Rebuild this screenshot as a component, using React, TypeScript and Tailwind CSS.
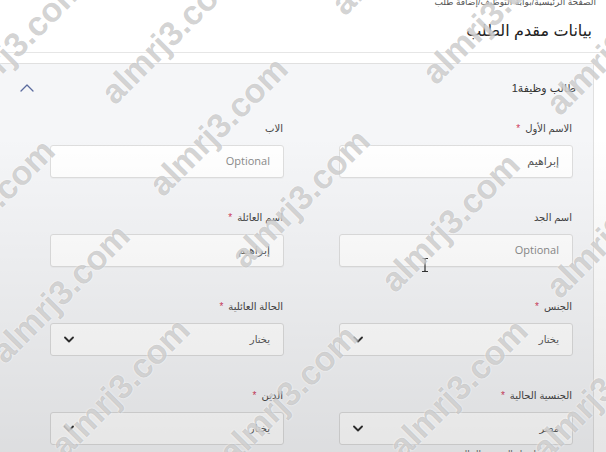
import React from "react";

const marks = [
  "left-[15px] top-[45px]",
  "left-[170px] top-[34px]",
  "left-[218px] top-[126px]",
  "left-[400px] top-[-55px]",
  "left-[491px] top-[14px]",
  "left-[615px] top-[45px]",
  "left-[-15px] top-[208px]",
  "left-[300px] top-[198px]",
  "left-[450px] top-[222px]",
  "left-[615px] top-[228px]",
  "left-[60px] top-[293px]",
  "left-[120px] top-[387px]",
  "left-[288px] top-[394px]",
  "left-[458px] top-[388px]",
  "left-[601px] top-[390px]",
];

function Label({ text, req }: { text: string; req?: boolean }) {
  return (
    <div className="h-[12px] mb-[10px] text-[10px] leading-[12px] text-[#444] pr-[1px]">
      <span>{text}</span>
      {req && <span className="text-[#d0405e] mr-[5px]">*</span>}
    </div>
  );
}

function TextField({ label, req, value }: { label: string; req?: boolean; value?: string }) {
  return (
    <div>
      <Label text={label} req={req} />
      <div className="h-[33px] rounded-[3px] border border-[#dedede] bg-white flex items-center pr-[13px] shadow-[0_1px_1px_rgba(0,0,0,0.03)]">
        {value ? (
          <span className="text-[11px] text-[#555]">{value}</span>
        ) : (
          <span className="text-[11px] text-[#8a8a8a] font-['Open_Sans',sans-serif]">Optional</span>
        )}
      </div>
    </div>
  );
}

function SelectField({ label, req, value, hint }: { label: string; req?: boolean; value: string; hint?: string }) {
  return (
    <div>
      <Label text={label} req={req} />
      <div className="h-[33px] rounded-[3px] border border-[#dcdcdc] bg-white flex items-center justify-between pr-[13px] pl-[13px]">
        <span className="text-[10px] text-[#555]">{value}</span>
        <svg width="10" height="7" viewBox="0 0 10 7">
          <polyline points="1,1.5 5,5.5 9,1.5" fill="none" stroke="#2f2f2f" strokeWidth="1.8" strokeLinecap="round" strokeLinejoin="round" />
        </svg>
      </div>
      {hint && <div className="mt-[3px] pr-[14px] text-[9px] leading-[12px] text-[#666]">{hint}</div>}
    </div>
  );
}

export default function App() {
  return (
    <div
      dir="rtl"
      className="relative w-[606px] h-[452px] overflow-hidden bg-white font-['Liberation_Sans','DejaVu_Sans',sans-serif]"
    >
      <div className="h-[12px] overflow-hidden pr-[10px]">
        <p className="-mt-[4px] text-[9px] leading-[12px] text-[#555]">الصفحة الرئيسية/بوابة التوظيف/إضافة طلب</p>
      </div>
      <h1 className="mt-[9px] pr-[14px] text-[16px] leading-[20px] text-[#222]">بيانات مقدم الطلب</h1>
      <div className="mt-[11px] border-b border-[#e6e6e6]" />

      <div className="mt-[10px] mr-[12px] border-t border-r border-[#e0e0e0] bg-[#f5f6f8] pt-[17px] h-[400px]">
        <div className="flex items-center justify-between h-[14px] pr-[17px] pl-[20px]">
          <span className="text-[11px] text-[#333]">طالب وظيفة1</span>
          <svg width="14" height="8" viewBox="0 0 14 8">
            <polyline points="1,7 7,1 13,7" fill="none" stroke="#5b6b9e" strokeWidth="1.3" strokeLinecap="round" strokeLinejoin="round" />
          </svg>
        </div>

        <div className="mt-[28px] pr-[20px] pl-[50px] grid grid-cols-2 gap-x-[55px] gap-y-[34px]">
          <TextField label="الاسم الأول" req value="إبراهيم" />
          <TextField label="الاب" />
          <TextField label="اسم الجد" />
          <TextField label="اسم العائلة" req value="إبراهيم" />
          <SelectField label="الجنس" req value="يختار" />
          <SelectField label="الحالة العائلية" req value="يختار" />
          <SelectField label="الجنسية الحالية" req value="مصر" hint="يرجى اختيار الجنسية الحالية" />
          <SelectField label="الدين" req value="يختار" />
        </div>
      </div>

      {/* text cursor */}
      <svg className="absolute left-[421px] top-[257px]" width="8" height="16" viewBox="0 0 8 16">
        <path d="M1 1.5 H3 Q4 1.5 4 3 V13 Q4 14.5 3 14.5 H1 M7 1.5 H5 Q4 1.5 4 3 M4 13 Q4 14.5 5 14.5 H7" fill="none" stroke="#333" strokeWidth="1.2" />
      </svg>

      {/* photo shading */}
      <div className="pointer-events-none absolute inset-0 bg-linear-to-b from-transparent from-[30%] to-black/10" />

      {/* watermarks */}
      {marks.map((m, i) => (
        <span
          key={i}
          dir="ltr"
          className={`pointer-events-none absolute ${m} -translate-x-1/2 -translate-y-1/2 -rotate-45 whitespace-nowrap font-['Liberation_Sans',sans-serif] font-bold text-[34px] leading-none text-[rgba(130,130,130,0.36)] [text-shadow:0_0_2px_rgba(255,255,255,0.9)]`}
        >
          almrj3.com
        </span>
      ))}
    </div>
  );
}
